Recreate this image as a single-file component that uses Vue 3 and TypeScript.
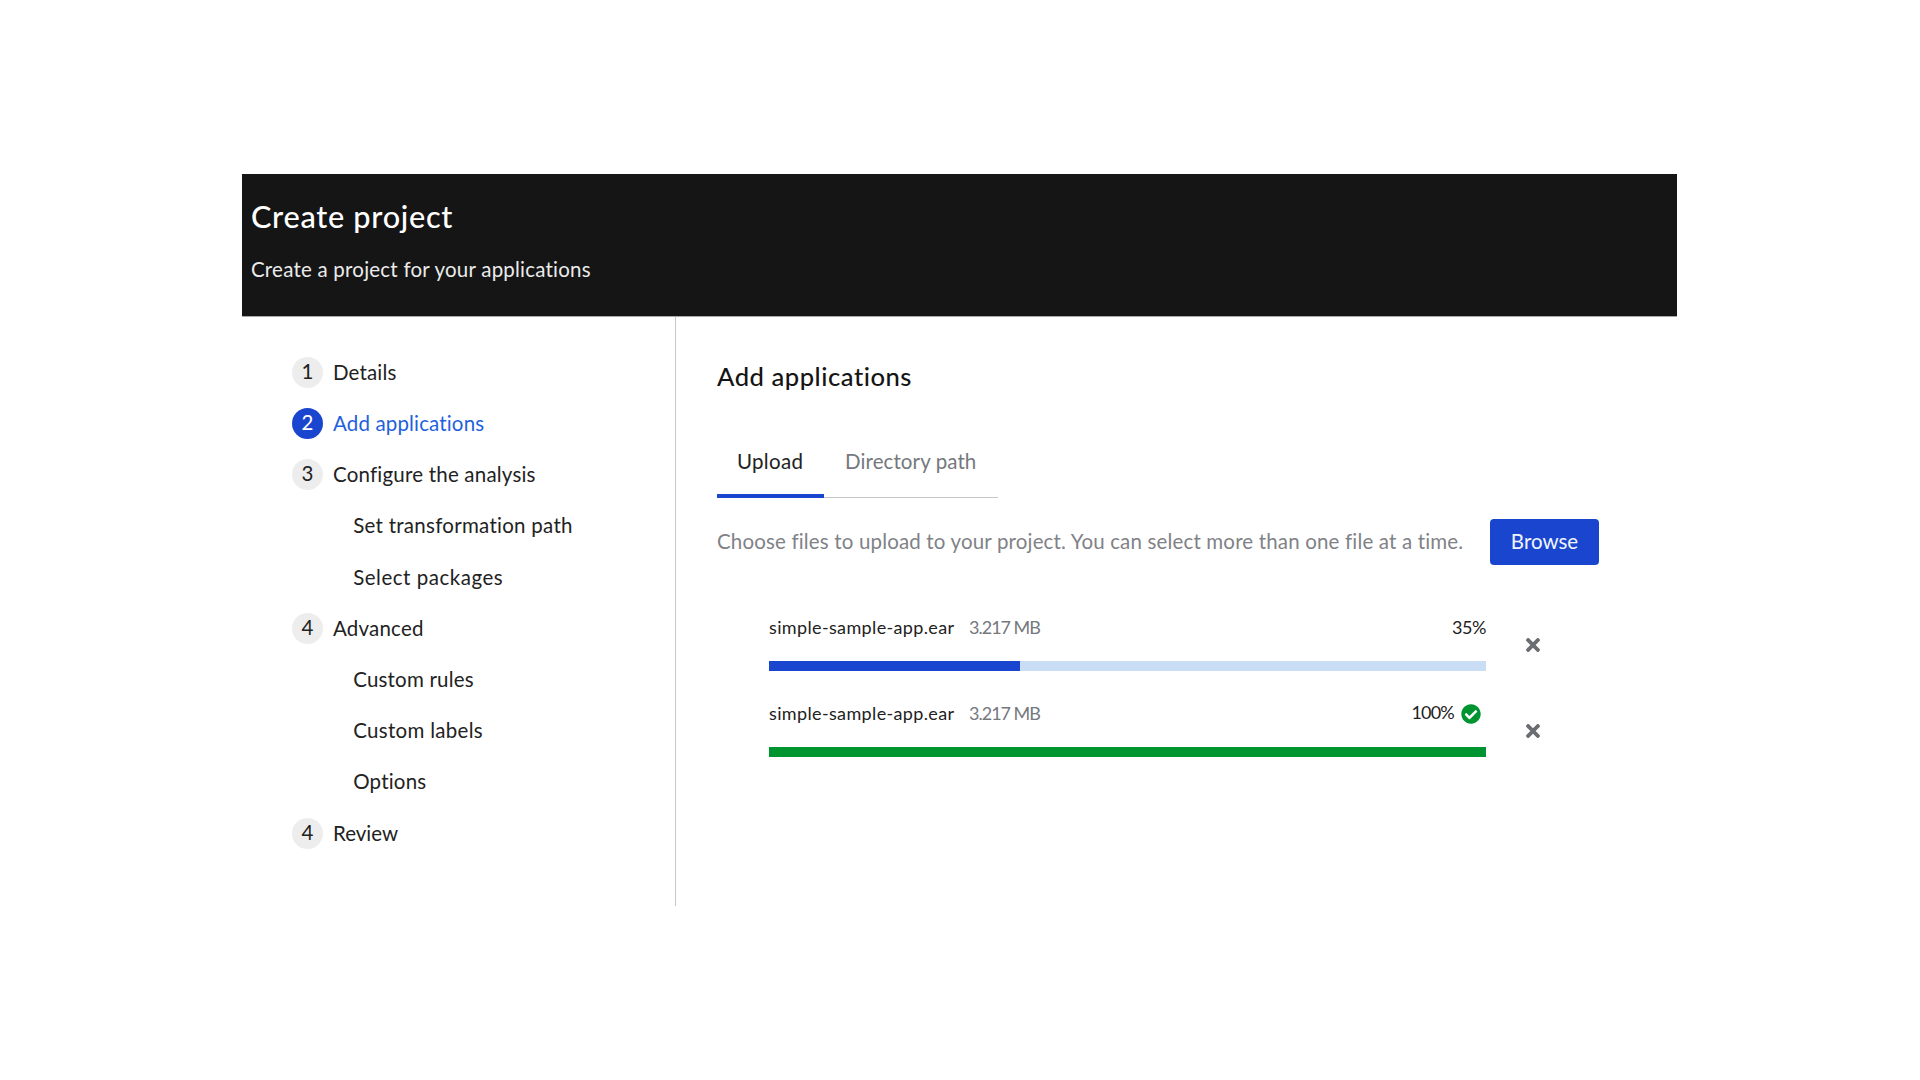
<script setup lang="ts">
interface Step { num?: number; label: string; track: number; current?: boolean }
interface UploadFile { name: string; size: string; percent: number; track: number; done: boolean }

const steps: Step[] = [
  { num: 1, label: 'Details', track: 0.15 },
  { num: 2, label: 'Add applications', track: 0.15, current: true },
  { num: 3, label: 'Configure the analysis', track: 0.2 },
  { label: 'Set transformation path', track: 0.27 },
  { label: 'Select packages', track: 0.52 },
  { num: 4, label: 'Advanced', track: 0.2 },
  { label: 'Custom rules', track: 0.2 },
  { label: 'Custom labels', track: 0.3 },
  { label: 'Options', track: 0.2 },
  { num: 4, label: 'Review', track: 0 },
]

const files: UploadFile[] = [
  { name: 'simple-sample-app.ear', size: '3.217 MB', percent: 35, track: -0.4, done: false },
  { name: 'simple-sample-app.ear', size: '3.217 MB', percent: 100, track: -0.8, done: true },
]
</script>

<template>
  <div class="wizard">
    <header class="header">
      <h1>Create project</h1>
      <p>Create a project for your applications</p>
    </header>
    <div class="body">
      <nav class="nav">
        <div v-for="(s, i) in steps" :key="i" class="step" :class="{ current: s.current, sub: !s.num }">
          <span v-if="s.num" class="num"><span>{{ s.num }}</span></span>
          <span class="label" :style="{ letterSpacing: s.track + 'px' }">{{ s.label }}</span>
        </div>
      </nav>
      <main class="main">
        <h2>Add applications</h2>
        <div class="tabs">
          <div class="tab active">Upload</div>
          <div class="tab">Directory path</div>
        </div>
        <div class="choose">
          <p>Choose files to upload to your project. You can select more than one file at a time.</p>
          <button type="button">Browse</button>
        </div>
        <div v-for="(f, i) in files" :key="i" class="file" :class="{ done: f.done }">
          <div class="progress">
            <div class="info">
              <span class="name">{{ f.name }}</span>
              <span class="size">{{ f.size }}</span>
              <span class="percent" :style="{ letterSpacing: f.track + 'px' }">{{ f.percent }}%</span>
              <svg v-if="f.done" class="check" viewBox="0 0 512 512">
                <path fill="currentColor" d="M504 256c0 136.967-111.033 248-248 248S8 392.967 8 256 119.033 8 256 8s248 111.033 248 248zM227.314 387.314l184-184c6.248-6.248 6.248-16.379 0-22.627l-22.627-22.627c-6.248-6.249-16.379-6.249-22.628 0L216 308.118l-70.059-70.059c-6.248-6.248-16.379-6.248-22.628 0l-22.627 22.627c-6.248 6.248-6.248 16.379 0 22.627l104 104c6.249 6.249 16.379 6.249 22.628.001z" />
              </svg>
            </div>
            <div class="bar"><div class="fill" :style="{ width: f.percent + '%' }"></div></div>
          </div>
          <svg class="remove" viewBox="0 80 352 352">
            <path fill="currentColor" d="M242.72 256l100.07-100.07c12.28-12.28 12.28-32.19 0-44.48l-22.24-22.24c-12.28-12.28-32.19-12.28-44.48 0L176 189.28 75.93 89.21c-12.28-12.28-32.19-12.28-44.48 0L9.21 111.45c-12.28 12.28-12.28 32.19 0 44.48L109.28 256 9.21 356.07c-12.28 12.28-12.28 32.19 0 44.48l22.24 22.24c12.28 12.28 32.2 12.28 44.48 0L176 322.72l100.07 100.07c12.28 12.28 32.2 12.28 44.48 0l22.24-22.24c12.28-12.28 12.28-32.19 0-44.48L242.72 256z" />
          </svg>
        </div>
      </main>
    </div>
  </div>
</template>

<style>
body { background: #fff; }
</style>

<style scoped>
* { box-sizing: border-box; }
.wizard {
  width: 1435px;
  margin: 174px 0 0 242px;
  font-family: Lato, "Liberation Sans", sans-serif;
  font-size: 20.5px;
  line-height: 30px;
  color: #222;
  white-space: nowrap;
}
h1, h2, p { margin: 0; }
.header {
  height: 143px;
  padding: 25px 0 0 9px;
  background: #151515;
  border-bottom: 1px solid #a8a8a8;
  color: #fff;
}
h1 { font-size: 30.7px; line-height: 36px; font-weight: 500; letter-spacing: 0.7px; margin-bottom: 19px; }
.header p { letter-spacing: 0.22px; color: #ebebeb; }
.body { display: flex; height: 589px; }
.nav { width: 434px; padding: 30px 0 0 50px; border-right: 1px solid #c7c7c7; }
.step { display: flex; align-items: center; height: 51.2px; }
.step.sub { padding-left: 61.2px; }
.num {
  display: flex;
  justify-content: center;
  width: 31px;
  height: 31px;
  margin-right: 10px;
  border-radius: 50%;
  background: #ededed;
  line-height: 29px;
}
.label { padding-bottom: 1.4px; }
.current .num { background: #1a46cf; color: #fff; }
.current .label { color: #1f61dc; }
.main { padding: 43px 0 0 41px; }
h2 { font-size: 25.6px; line-height: 32px; font-weight: 500; letter-spacing: 0.52px; color: #151515; }
.tabs { display: flex; width: 281px; height: 52px; margin-top: 54px; box-shadow: inset 0 -1px #c7c7c7; }
.tab { padding-left: 22px; color: #75787d; letter-spacing: 0.1px; }
.tab.active { width: 107px; margin-right: -1px; padding-left: 20px; color: #222; border-bottom: 4px solid #1a46cf; letter-spacing: 0.3px; }
.choose { display: flex; align-items: center; height: 46px; margin-top: 21px; }
.choose p { width: 773px; padding-bottom: 3px; color: #7f8287; letter-spacing: 0.16px; }
button {
  width: 109px;
  height: 46px;
  padding: 0 0 3px;
  border: 0;
  border-radius: 4px;
  background: #1a46cf;
  color: #f0f4ff;
  font: inherit;
}
.file { display: flex; align-items: center; height: 57px; margin: 49px 0 0 52px; font-size: 18px; line-height: 26px; }
.file + .file { margin-top: 29px; }
.progress { width: 717px; }
.info { display: flex; height: 26px; margin-bottom: 21px; }
.name { width: 200px; letter-spacing: 0.36px; }
.size { color: #75787d; letter-spacing: -1px; }
.percent { margin-left: auto; }
.done .percent { margin-top: -1px; }
.check { width: 20px; height: 20px; margin: 4px 5.5px 0 6.5px; color: #009431; }
.bar { height: 10px; background: #c9ddf5; }
.fill { height: 100%; background: #1a46cf; }
.done .fill { background: #009431; }
.remove { width: 14px; height: 14px; margin: 5px 0 0 40px; color: #6a6e73; }
</style>
